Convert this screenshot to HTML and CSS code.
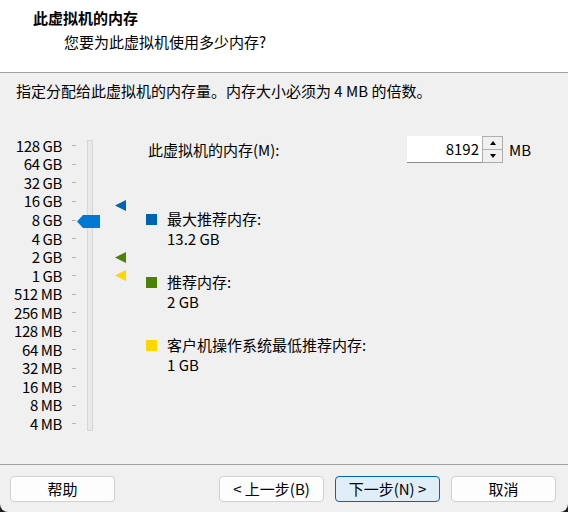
FILE: index.html
```html
<!DOCTYPE html>
<html lang="zh-CN">
<head>
<meta charset="utf-8">
<title>此虚拟机的内存</title>
<link rel="stylesheet" href="styles.css">
</head>
<body>
<div class="window">
  <header class="header">
    <div class="title">此虚拟机的内存</div>
    <div class="subtitle">您要为此虚拟机使用多少内存?</div>
  </header>
  <p class="instruction">指定分配给此虚拟机的内存量。内存大小必须为 4 MB 的倍数。</p>
  <div class="content">
    <div class="slider">
      <ul class="scale">
        <li><span class="lbl">128 GB</span><i class="tick"></i></li>
        <li><span class="lbl">64 GB</span><i class="tick"></i></li>
        <li><span class="lbl">32 GB</span><i class="tick"></i></li>
        <li><span class="lbl">16 GB</span><i class="tick"></i></li>
        <li><span class="lbl">8 GB</span><i class="tick"></i></li>
        <li><span class="lbl">4 GB</span><i class="tick"></i></li>
        <li><span class="lbl">2 GB</span><i class="tick"></i></li>
        <li><span class="lbl">1 GB</span><i class="tick"></i></li>
        <li><span class="lbl">512 MB</span><i class="tick"></i></li>
        <li><span class="lbl">256 MB</span><i class="tick"></i></li>
        <li><span class="lbl">128 MB</span><i class="tick"></i></li>
        <li><span class="lbl">64 MB</span><i class="tick"></i></li>
        <li><span class="lbl">32 MB</span><i class="tick"></i></li>
        <li><span class="lbl">16 MB</span><i class="tick"></i></li>
        <li><span class="lbl">8 MB</span><i class="tick"></i></li>
        <li><span class="lbl">4 MB</span><i class="tick"></i></li>
      </ul>
      <div class="track"></div>
      <div class="knob"></div>
      <div class="marker marker-max" style="top:64px"></div>
      <div class="marker marker-rec" style="top:116px"></div>
      <div class="marker marker-min" style="top:134px"></div>
    </div>
    <div class="panel">
      <div class="mem-row">
        <label class="mem-label">此虚拟机的内存(M):</label>
        <div class="spin">
          <div class="spin-input">8192</div>
          <div class="spin-btns">
            <div class="spin-btn"><span class="arr up"></span></div>
            <div class="spin-btn"><span class="arr down"></span></div>
          </div>
        </div>
        <span class="unit">MB</span>
      </div>
      <div class="legend first">
        <span class="sq sq-max"></span>
        <div class="legend-text">
          <div>最大推荐内存:</div>
          <div>13.2 GB</div>
        </div>
      </div>
      <div class="legend">
        <span class="sq sq-rec"></span>
        <div class="legend-text">
          <div>推荐内存:</div>
          <div>2 GB</div>
        </div>
      </div>
      <div class="legend">
        <span class="sq sq-min"></span>
        <div class="legend-text">
          <div>客户机操作系统最低推荐内存:</div>
          <div>1 GB</div>
        </div>
      </div>
    </div>
  </div>
  <footer class="footer">
    <button class="btn">帮助</button>
    <div class="spacer"></div>
    <button class="btn">&lt; 上一步(B)</button>
    <button class="btn btn-default">下一步(N) &gt;</button>
    <button class="btn">取消</button>
  </footer>
</div>
</body>
</html>
```
FILE: styles.css
```css
html, body {
  margin: 0;
  padding: 0;
  background: #1c1c1c;
}
body {
  font-family: "Noto Sans CJK SC", "Noto Sans", sans-serif;
  font-size: 15px;
  color: #000;
}
.window {
  width: 568px;
  height: 512px;
  background: #f0f0f0;
  display: flex;
  flex-direction: column;
  overflow: hidden;
  border-radius: 0 0 8px 8px;
}
.header {
  height: 72px;
  background: #fff;
  border-bottom: 1px solid #a0a0a0;
  flex: none;
}
.title {
  font-weight: bold;
  line-height: 20px;
  padding: 8px 0 0 33px;
}
.subtitle {
  line-height: 20px;
  padding: 4px 0 0 64px;
}
.instruction {
  margin: 0;
  padding: 8px 0 0 16px;
  line-height: 20px;
}
.content {
  margin-top: 35px;
  display: flex;
  align-items: flex-start;
}
.slider {
  position: relative;
  width: 146px;
  height: 300px;
  flex: none;
}
.scale {
  list-style: none;
  margin: 0;
  padding: 0.7px 0 0 0;
}
.scale li {
  height: 18.53px;
  display: flex;
  align-items: center;
}
.lbl {
  width: 62px;
  text-align: right;
  line-height: 16px;
  white-space: nowrap;
  letter-spacing: -0.4px;
}
.tick {
  margin-left: 10px;
  width: 4px;
  height: 1px;
  background: #b4b4b4;
}
.track {
  position: absolute;
  left: 87px;
  top: 4px;
  width: 4px;
  height: 289px;
  border: 1px solid #d6d6d6;
  background: #e7eaea;
}
.knob {
  position: absolute;
  left: 77px;
  top: 79px;
  width: 23px;
  height: 13px;
  background: #0078d4;
  clip-path: polygon(0 50%, 6px 0, 100% 0, 100% 100%, 6px 100%);
}
.marker {
  position: absolute;
  left: 115px;
  width: 11px;
  height: 11px;
  clip-path: polygon(0 50%, 100% 0, 100% 100%);
}
.marker-max { background: #0063b1; }
.marker-rec { background: #498205; }
.marker-min { background: #ffd700; }
.panel {
  flex: 1;
}
.mem-row {
  display: flex;
  align-items: center;
  height: 27px;
  padding-left: 2px;
}
.mem-label {
  width: 259px;
  line-height: 20px;
}
.spin {
  display: flex;
  height: 27px;
}
.spin-input {
  width: 72px;
  height: 26px;
  background: #fff;
  border-bottom: 1px solid #8a8a8a;
  text-align: right;
  padding-right: 3px;
  line-height: 26px;
}
.spin-btns {
  width: 21px;
  display: flex;
  flex-direction: column;
  background: #fff;
}
.spin-btn {
  flex: 1;
  border: 1px solid #adadad;
  background: #f0f0f0;
  display: flex;
  align-items: center;
  justify-content: center;
}
.spin-btn + .spin-btn {
  border-top: none;
}
.arr {
  width: 0;
  height: 0;
  border-left: 3.5px solid transparent;
  border-right: 3.5px solid transparent;
}
.arr.up { border-bottom: 4px solid #000; }
.arr.down { border-top: 4px solid #000; }
.unit {
  margin-left: 6px;
  line-height: 20px;
}
.legend {
  display: flex;
  align-items: flex-start;
  margin-top: 24px;
}
.legend.first {
  margin-top: 46px;
}
.sq {
  width: 11px;
  height: 11px;
  margin-top: 4.5px;
  margin-right: 10px;
  flex: none;
}
.sq-max { background: #0063b1; }
.sq-rec { background: #498205; }
.sq-min { background: #ffd700; }
.legend-text {
  line-height: 19.5px;
}
.footer {
  margin-top: auto;
  border-top: 1px solid #a0a0a0;
  padding: 11px 12px 10px 10px;
  display: flex;
  gap: 11px;
}
.spacer {
  flex: 1;
}
.btn {
  width: 105px;
  height: 26px;
  border: 1px solid #d0d0d0;
  border-radius: 4px;
  background: #fdfdfd;
  font-family: inherit;
  font-size: 15px;
  color: #000;
  padding: 0;
  line-height: 22px;
}
.btn-default {
  border-color: #0067c0;
  background: #e0eef9;
}
```
